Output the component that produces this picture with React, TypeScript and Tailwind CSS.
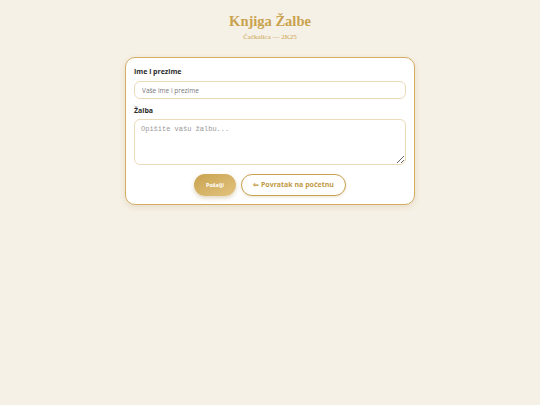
export default function App() {
  return (
    <div className="min-h-[405px] bg-[#f6f1e6] pt-[12px] font-['Open_Sans',sans-serif]">
      {/* Header */}
      <div className="text-center">
        <h1 className="font-['Liberation_Serif',serif] text-[14.5px] leading-[19px] font-bold text-[#c9a24f]">
          Knjiga Žalbe
        </h1>
        <p className="mt-[2px] font-['Liberation_Serif',serif] text-[7px] leading-[9px] text-[#c9a24f]">
          Čačkalica — 2K25
        </p>
      </div>

      {/* Form card */}
      <div className="mx-auto mt-[15px] w-[290px] rounded-[10px] border border-[#d2ad63] bg-white px-[8px] pt-[9px] pb-[8px] shadow-[0_2px_6px_rgba(160,130,60,0.18)]">
        <label className="block text-[7px] leading-[10px] font-bold text-[#2b2b2b]">Ime i prezime</label>
        <input
          type="text"
          placeholder="Vaše ime i prezime"
          className="mt-[4px] block h-[18px] w-full rounded-[6px] border border-[#eadcb8] px-[7px] text-[6.5px] text-[#333] placeholder:text-[#777] outline-none"
        />

        <label className="mt-[7px] block text-[7px] leading-[10px] font-bold text-[#2b2b2b]">Žalba</label>
        <textarea
          placeholder="Opišite vašu žalbu..."
          className="mt-[3px] block h-[46px] w-full rounded-[6px] border border-[#eadcb8] px-[6px] py-[4px] font-['Liberation_Mono',monospace] text-[7px] text-[#333] placeholder:text-[#999] outline-none"
        />

        {/* Buttons */}
        <div className="mt-[9px] flex items-center justify-center gap-[5px]">
          <button className="h-[22px] w-[42px] rounded-full bg-gradient-to-br from-[#c9a24f] to-[#e2c47f] text-[5.5px] font-bold text-white shadow-[0_2px_4px_rgba(150,120,50,0.3)]">
            Pošalji
          </button>
          <button className="h-[22px] w-[105px] rounded-full border border-[#c9a24f] bg-white text-[7px] font-bold text-[#c29a45] shadow-[0_1px_3px_rgba(150,120,50,0.2)]">
            ⇐ Povratak na početnu
          </button>
        </div>
      </div>
    </div>
  );
}
